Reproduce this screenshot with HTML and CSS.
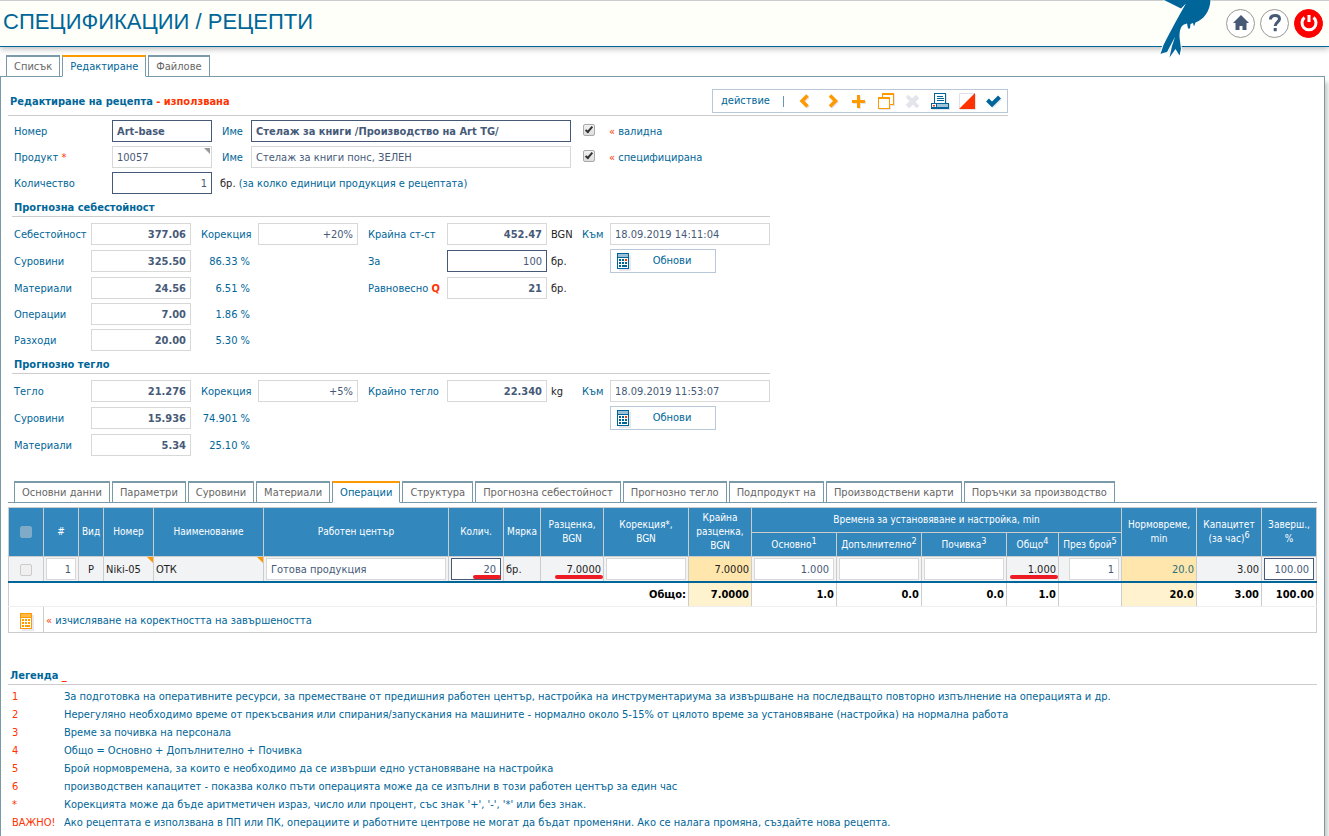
FILE: index.html
```
<!DOCTYPE html>
<html lang="bg">
<head>
<meta charset="utf-8">
<title>Спецификации / Рецепти</title>
<link rel="stylesheet" href="styles.css">
</head>
<body>
<svg class="defs" width="0" height="0" aria-hidden="true">
  <symbol id="calc" viewBox="0 0 12 16">
    <path fill="currentColor" d="M0 0h12v16H0z"/>
    <path fill="#fff" d="M1 5h10v10H1z"/>
    <path class="calc-top" d="M1 1h10v3H1z"/>
    <path fill="currentColor" d="M2 6h2v2H2zM5 6h2v2H5zM2 9h2v2H2zM5 9h2v2H5zM8 9h2v2H8zM2 12h2v2H2zM5 12h5v2H5z"/>
    <path class="calc-key" d="M8 6h2v2H8z"/>
  </symbol>
</svg>

<header class="top">
  <h1>СПЕЦИФИКАЦИИ / РЕЦЕПТИ</h1>
  <svg class="bird" width="70" height="64" viewBox="0 0 70 64" aria-hidden="true">
    <path d="M14 0L31 8.500L36 3.500C30 14 20 32 13.500 45L10.500 54L13 53L17 52L25 37L22 46L19.500 57.500L25.500 49L29.500 55.500L31 49L29.500 37C29.500 30 31 26 34 24.500L37 23.500L38 28.500L40 28.500L40.500 24L43 23L44 26.500L45.500 22.500C53 20 60 12 60.500 0Z" fill="#069" stroke="#fff" stroke-width="2" paint-order="stroke"/>
  </svg>
  <nav class="round-nav">
    <a href="#" class="round" aria-label="Начало"><svg width="18" height="18" viewBox="0 0 18 18"><path fill="#475a75" d="M9 1L1 9h2.500v7H7.500v-4h3v4h4V9H17z"/></svg></a>
    <a href="#" class="round" aria-label="Помощ"><svg width="18" height="20" viewBox="0 0 18 20"><path fill="none" stroke="#475a75" stroke-width="3" d="M4.500 6.500C4.500 3.500 6.500 2.500 9 2.500s4.500 1.200 4.500 3.600C13.500 9 9.200 9.300 9.200 13"/><path fill="#475a75" d="M7.700 15h3v3.200h-3z"/></svg></a>
    <a href="#" class="round power" aria-label="Изход"><svg width="20" height="20" viewBox="0 0 20 20"><path fill="none" stroke="#fff" stroke-width="3" d="M5.500 4.500a7 7 0 1 0 9 0M10 2v7"/></svg></a>
  </nav>
</header>

<nav class="tabs main-tabs">
  <a href="#" class="tab">Списък</a>
  <a href="#" class="tab active">Редактиране</a>
  <a href="#" class="tab">Файлове</a>
</nav>

<main class="panel">
  <div class="title-row">
    <h2>Редактиране на рецепта <span class="red">- използвана</span></h2>
    <div class="toolbar">
      <span class="toolbar-label">действие</span><span class="bar"></span>
      <button type="button" aria-label="Предишен"><svg width="16" height="16" viewBox="0 0 16 16"><path fill="none" stroke="#f90" stroke-width="3.500" d="M10.500 2.500L5 8l5.500 5.500"/></svg></button>
      <button type="button" aria-label="Следващ"><svg width="16" height="16" viewBox="0 0 16 16"><path fill="none" stroke="#f90" stroke-width="3.500" d="M6 2.500L11.500 8L6 13.500"/></svg></button>
      <button type="button" aria-label="Нов"><svg width="16" height="16" viewBox="0 0 16 16"><path fill="#f90" d="M6 2h3v5h5v3H9v5H6v-5H1V7h5z"/></svg></button>
      <button type="button" aria-label="Копие"><svg width="18" height="16" viewBox="0 0 18 16"><path fill="#f90" d="M5 0h12v12h-4v4H1V4h4z"/><path fill="#fff" d="M6 2h10v9h-3V4H6zM2 6h10v9H2z"/></svg></button>
      <button type="button" aria-label="Изтриване" disabled><svg width="16" height="16" viewBox="0 0 16 16"><path fill="none" stroke="#e3e5ea" stroke-width="3.500" d="M2 3l10 10M12 3L2 13"/></svg></button>
      <button type="button" aria-label="Печат"><svg width="18" height="16" viewBox="0 0 18 16"><path fill="#069" d="M3 0h12v10h3v6H0v-6h3z"/><path fill="#fff" d="M4 1h10v9H4zM1 11h4v3H1z"/><path fill="#069" d="M6 3h6v1H6zM6 5h7v1H6zM6 7h7v1H6z"/><path fill="#a3c4d8" d="M6 11h11v3H6z"/><path fill="#f30" d="M2 12h2v1.500H2z"/></svg></button>
      <button type="button" aria-label="Статус"><svg width="16" height="16" viewBox="0 0 16 16"><path fill="#fff" stroke="#e0e0e6" d="M.500.500h15v15H.500z"/><path fill="#f30" d="M16 0v16H0z"/></svg></button>
      <button type="button" aria-label="Запис"><svg width="16" height="16" viewBox="0 0 16 16"><path fill="none" stroke="#069" stroke-width="4" d="M1.500 7l4.500 4.500L13.500 4"/></svg></button>
    </div>
  </div>

  <section class="form identity">
    <label for="num">Номер</label>
    <input id="num" class="field edit strong" value="Art-base">
    <label for="name" class="pad">Име</label>
    <input id="name" class="field edit strong" value="Стелаж за книги /Производство на Art TG/">
    <span class="check-cell"><input type="checkbox" id="valid" checked></span>
    <label for="valid"><span class="red">«</span> валидна</label>

    <label for="prod">Продукт <span class="red">*</span></label>
    <span class="lookup"><input id="prod" class="field" value="10057" readonly></span>
    <label for="prodname" class="pad">Име</label>
    <input id="prodname" class="field" value="Стелаж за книги понс, ЗЕЛЕН" readonly>
    <span class="check-cell"><input type="checkbox" id="spec" checked></span>
    <label for="spec"><span class="red">«</span> специфицирана</label>

    <label for="qty">Количество</label>
    <input id="qty" class="field edit num" value="1">
    <span class="note"><span class="black">бр.</span> (за колко единици продукция е рецептата)</span>
  </section>

  <h3>Прогнозна себестойност</h3>
  <section class="form totals cost">
    <label for="c1">Себестойност</label><input id="c1" class="field num strong" value="377.06" readonly>
    <label for="c1k" class="pad">Корекция</label><input id="c1k" class="field num" value="+20%" readonly>
    <label for="c1f" class="pad">Крайна ст-ст</label><input id="c1f" class="field num strong" value="452.47" readonly>
    <span class="unit">BGN</span><label for="c1d">Към</label><input id="c1d" class="field" value="18.09.2019 14:11:04" readonly>

    <label for="c2">Суровини</label><input id="c2" class="field num strong" value="325.50" readonly>
    <span class="pct">86.33 %</span><label for="c2f" class="pad from-five">За</label><input id="c2f" class="field num edit" value="100">
    <span class="unit">бр.</span><button type="button" class="refresh"><svg width="12" height="16"><use href="#calc"/></svg><span>Обнови</span></button>

    <label for="c3">Материали</label><input id="c3" class="field num strong" value="24.56" readonly>
    <span class="pct">6.51 %</span><label for="c3f" class="pad from-five">Равновесно <b class="red">Q</b></label><input id="c3f" class="field num strong" value="21" readonly>
    <span class="unit">бр.</span>

    <label for="c4" class="first">Операции</label><input id="c4" class="field num strong" value="7.00" readonly><span class="pct">1.86 %</span>
    <label for="c5" class="first">Разходи</label><input id="c5" class="field num strong" value="20.00" readonly><span class="pct">5.30 %</span>
  </section>

  <h3>Прогнозно тегло</h3>
  <section class="form totals weight">
    <label for="w1">Тегло</label><input id="w1" class="field num strong" value="21.276" readonly>
    <label for="w1k" class="pad">Корекция</label><input id="w1k" class="field num" value="+5%" readonly>
    <label for="w1f" class="pad">Крайно тегло</label><input id="w1f" class="field num strong" value="22.340" readonly>
    <span class="unit">kg</span><label for="w1d">Към</label><input id="w1d" class="field" value="18.09.2019 11:53:07" readonly>

    <label for="w2">Суровини</label><input id="w2" class="field num strong" value="15.936" readonly>
    <span class="pct">74.901 %</span><button type="button" class="refresh"><svg width="12" height="16"><use href="#calc"/></svg><span>Обнови</span></button>

    <label for="w3" class="first">Материали</label><input id="w3" class="field num strong" value="5.34" readonly><span class="pct">25.10 %</span>
  </section>

  <nav class="tabs sub-tabs">
    <a href="#" class="tab">Основни данни</a>
    <a href="#" class="tab">Параметри</a>
    <a href="#" class="tab">Суровини</a>
    <a href="#" class="tab">Материали</a>
    <a href="#" class="tab active">Операции</a>
    <a href="#" class="tab">Структура</a>
    <a href="#" class="tab">Прогнозна себестойност</a>
    <a href="#" class="tab">Прогнозно тегло</a>
    <a href="#" class="tab">Подпродукт на</a>
    <a href="#" class="tab">Производствени карти</a>
    <a href="#" class="tab">Поръчки за производство</a>
  </nav>

  <table class="ops">
    <colgroup>
      <col class="w35"><col class="w35"><col class="w25"><col class="w50"><col class="w110"><col><col class="w55"><col class="w37"><col class="w63"><col class="w85"><col class="w63"><col class="w85"><col class="w85"><col class="w85"><col class="w52"><col class="w63"><col class="w75"><col class="w65"><col class="w55">
    </colgroup>
    <thead>
      <tr>
        <th rowspan="2"><input type="checkbox" aria-label="Избор на всички" disabled></th>
        <th rowspan="2">#</th><th rowspan="2">Вид</th><th rowspan="2">Номер</th><th rowspan="2">Наименование</th><th rowspan="2">Работен център</th><th rowspan="2">Колич.</th><th rowspan="2">Мярка</th>
        <th rowspan="2">Разценка,<br>BGN</th><th rowspan="2">Корекция*,<br>BGN</th><th rowspan="2">Крайна<br>разценка,<br>BGN</th>
        <th colspan="5">Времена за установяване и настройка, min</th>
        <th rowspan="2">Нормовреме,<br>min</th><th rowspan="2">Капацитет<br>(за час)<sup>6</sup></th><th rowspan="2">Заверш.,<br>%</th>
      </tr>
      <tr class="sub-head"><th>Основно<sup>1</sup></th><th>Допълнително<sup>2</sup></th><th>Почивка<sup>3</sup></th><th>Общо<sup>4</sup></th><th>През брой<sup>5</sup></th></tr>
    </thead>
    <tbody>
      <tr class="item">
        <td class="mid"><input type="checkbox" aria-label="Избор на ред 1" disabled></td>
        <td class="in"><input class="field num" aria-label="#" value="1" readonly></td>
        <td class="mid">P</td>
        <td class="link">Niki-05</td>
        <td class="link">ОТК</td>
        <td class="in"><input class="field" aria-label="Работен център" value="Готова продукция" readonly></td>
        <td class="in marked short"><input class="field num edit" aria-label="Колич." value="20"></td>
        <td>бр.</td>
        <td class="num marked price">7.0000</td>
        <td class="in"><input class="field num" aria-label="Корекция" readonly></td>
        <td class="num gold">7.0000</td>
        <td class="in"><input class="field num" aria-label="Основно" value="1.000" readonly></td>
        <td class="in"><input class="field num" aria-label="Допълнително" readonly></td>
        <td class="in"><input class="field num" aria-label="Почивка" readonly></td>
        <td class="num marked">1.000</td>
        <td class="in narrow"><input class="field num" aria-label="През брой" value="1" readonly></td>
        <td class="num gold teal">20.0</td>
        <td class="num">3.00</td>
        <td class="in"><input class="field num edit" aria-label="Заверш." value="100.00"></td>
      </tr>
    </tbody>
    <tfoot>
      <tr class="sum">
        <td colspan="10" class="num">Общо:</td><td class="num pale">7.0000</td><td class="num">1.0</td><td class="num">0.0</td><td class="num">0.0</td><td class="num">1.0</td><td></td><td class="num pale">20.0</td><td class="num">3.00</td><td class="num">100.00</td>
      </tr>
      <tr class="tools">
        <td class="mid"><button type="button" class="calc-orange" aria-label="Изчисляване"><svg width="12" height="16"><use href="#calc"/></svg></button></td>
        <td colspan="18"><span class="red">«</span> изчисляване на коректността на завършеността</td>
      </tr>
    </tfoot>
  </table>

  <h3 class="legend-title">Легенда <span class="red">_</span></h3>
  <dl class="legend">
    <dt>1</dt><dd>За подготовка на оперативните ресурси, за преместване от предишния работен център, настройка на инструментариума за извършване на последващто повторно изпълнение на операцията и др.</dd>
    <dt>2</dt><dd>Нерегуляно необходимо време от прекъсвания или спирания/запускания на машините - нормално около 5-15% от цялото време за установяване (настройка) на нормална работа</dd>
    <dt>3</dt><dd>Време за почивка на персонала</dd>
    <dt>4</dt><dd>Общо = Основно + Допълнително + Почивка</dd>
    <dt>5</dt><dd>Брой нормовремена, за които е необходимо да се извърши едно установяване на настройка</dd>
    <dt>6</dt><dd>производствен капацитет - показва колко пъти операцията може да се изпълни в този работен център за един час</dd>
    <dt>*</dt><dd>Корекцията може да бъде аритметичен израз, число или процент, със знак '+', '-', '*' или без знак.</dd>
    <dt>ВАЖНО!</dt><dd>Ако рецептата е използвана в ПП или ПК, операциите и работните центрове не могат да бъдат променяни. Ако се налага промяна, създайте нова рецепта.</dd>
  </dl>
</main>
</body>
</html>
```
FILE: styles.css
```
* { box-sizing: border-box; }

body {
  margin: 0;
  min-height: 100vh;
  display: flex;
  flex-direction: column;
  background: #fff;
  color: #069;
  font: 11px/16px "DejaVu Sans Condensed", "Noto Sans", sans-serif;
}

h1, h2, h3, dl, dd { margin: 0; }
a { color: inherit; text-decoration: none; }
button, input { font: inherit; color: inherit; }
button { padding: 0; border: 0; background: none; }
svg { display: block; }
.defs { position: absolute; }
.red { color: #f30; }
.black { color: #222; }

/* Header */
.top {
  position: relative;
  display: flex;
  align-items: center;
  justify-content: space-between;
  height: 47px;
  padding: 0 6px 0 3px;
  border-top: 1px solid #ccc;
  border-bottom: 1px solid #069;
  background: #fdfff8;
  box-shadow: 0 2px 6px #bbb;
}
h1 {
  padding-bottom: 4px;
  font: 22px/26px "Liberation Sans", sans-serif;
}
.bird { position: absolute; top: -1px; right: 109px; }
.round-nav { display: flex; gap: 5px; padding-bottom: 1px; }
.round {
  display: flex;
  align-items: center;
  justify-content: center;
  width: 29px;
  height: 29px;
  border: 1px solid #999;
  border-radius: 50%;
  background: #fff;
}
.power { border-color: #f00; background: #f00; }

/* Tabs */
.tabs { display: flex; gap: 2px; }
.main-tabs { padding: 8px 6px 0; }
.tab {
  height: 22px;
  padding: 1px 7px 0;
  border: 1px solid #7a9aa9;
  border-top-width: 2px;
  background: #fff;
  color: #666;
  line-height: 18px;
}
.tab.active {
  border-top-color: #f90;
  border-bottom-color: #fff;
  color: #069;
}
.main-tabs .tab { position: relative; z-index: 1; margin-bottom: -1px; }

.panel {
  flex: 1;
  margin-right: 4px;
  padding: 12px 7px 4px;
  border: 1px solid #7a9aa9;
  border-bottom: 0;
  box-shadow: 3px 6px 4px #ccc;
}

.title-row {
  display: flex;
  justify-content: space-between;
  max-width: 1000px;
  padding-bottom: 2px;
  border-bottom: 1px solid #ccc;
}
h2 { padding: 1px 0 0 2px; font-size: 11px; line-height: 23px; }

.toolbar {
  display: flex;
  align-items: center;
  height: 24px;
  border: 1px solid #b8c8d8;
}
.toolbar-label { width: 70px; padding-left: 8px; }
.bar { width: 1px; height: 11px; margin-right: 7px; background: #6699aa; }
.toolbar button {
  display: flex;
  justify-content: center;
  width: 27px;
}
.toolbar svg { filter: drop-shadow(1px 1px 0 #e4e4ea); }

/* Form */
.form { display: grid; margin-left: 6px; }
.form > label, .form > span { line-height: 23px; white-space: nowrap; }
.identity {
  grid-template-columns: 98px 100px 39px 320px 38px auto;
  grid-template-rows: 26px 26px 22px;
  margin-top: 4px;
}
.totals { grid-template-columns: 77px 100px 67px 100px 89px 100px 35px 28px 160px; }
.cost { grid-template-rows: 27px 27px 26px 26px 22px; }
.weight { grid-template-rows: 27px 27px 22px; }

.field {
  display: block;
  width: 100%;
  height: 22px;
  padding: 1px 4px 0;
  border: 1px solid #d8d8d8;
  border-radius: 0;
  background: #fff;
  color: #465a78;
  outline: 0;
}
.edit { border-color: #465a78; }
.strong { font-weight: 700; }
.num { text-align: right; }
.pad { padding-left: 10px; }
.note { grid-column: 3 / -1; padding-left: 8px; }
.first { grid-column: 1; }
.from-five { grid-column: 5; }
.pct { padding-right: 8px; text-align: right; }
.form > .unit { padding-left: 4px; color: #222; line-height: 24px; }

.lookup { position: relative; }
.lookup::after, .link::after {
  content: "";
  position: absolute;
  top: 2px;
  right: 2px;
  border: 3px solid #999;
  border-left-color: transparent;
  border-bottom-color: transparent;
}
.check-cell { padding: 4px 0 0 12px; }

input[type="checkbox"] {
  display: block;
  width: 12px;
  height: 12px;
  margin: 0;
  appearance: none;
  border: 1px solid #aaa;
  border-radius: 2px;
  background: linear-gradient(#f2f2f2, #ddd);
}
input[type="checkbox"]:checked::after {
  content: "";
  display: block;
  width: 2px;
  height: 6px;
  margin: 0 0 0 3px;
  border: solid #333;
  border-width: 0 2px 2px 0;
  transform: rotate(40deg);
}
input[type="checkbox"]:disabled { border-color: #ccc; background: #f0f0f0; }

.refresh {
  --calc-top: #9cbfd6;
  --calc-key: #f30;
  display: flex;
  align-items: center;
  grid-column: 9;
  width: 106px;
  height: 24px;
  margin-top: -1px;
  padding-left: 6px;
  border: 1px solid #b8c8d8;
}
.refresh span { flex: 1; }
.refresh svg, .calc-orange svg { filter: drop-shadow(2px 2px 0 #e8e8ee); }
.calc-top { fill: var(--calc-top); }
.calc-key { fill: var(--calc-key); }

h3 {
  max-width: 758px;
  margin: 5px 0 6px 4px;
  padding: 1px 2px 0;
  border-bottom: 1px solid #ccc;
  font-size: 11px;
}

/* Operations */
.sub-tabs {
  margin-top: 25px;
  padding: 0 6px;
  border-bottom: 1px solid #7a9aa9;
}
.sub-tabs .tab { margin-bottom: -1px; white-space: nowrap; }

.ops {
  width: 100%;
  margin-top: 4px;
  border-collapse: collapse;
  table-layout: fixed;
}
.w25 { width: 25px; }
.w35 { width: 35px; }
.w37 { width: 37px; }
.w50 { width: 50px; }
.w52 { width: 52px; }
.w55 { width: 55px; }
.w63 { width: 63px; }
.w65 { width: 65px; }
.w75 { width: 75px; }
.w85 { width: 85px; }
.w110 { width: 110px; }

.ops th {
  height: 25px;
  padding: 0;
  border: 1px solid #ccc;
  background: #3287bd;
  color: #fff;
  font-size: 10px;
  font-weight: 400;
  line-height: 14px;
  white-space: nowrap;
}
.ops .sub-head th { height: 24px; }
.ops th input[type="checkbox"] {
  margin: 0 auto;
  border-color: #7fabc8;
  background: #7fabc8;
}
.ops sup { font-size: 9px; line-height: 0; }
.ops td {
  height: 25px;
  padding: 2px 2px 0;
  border: 1px solid #ccc;
  color: #222;
}
.item td { position: relative; background: #f2f3f5; }
.ops td.in { padding: 0 2px; }
.ops td.narrow { padding-left: 10px; }
.ops td.mid { text-align: center; }
.mid input[type="checkbox"] { margin: 0 auto; }
.ops .item td { border-bottom: 2px solid #069; }
.ops .item td.gold { background: #ffe6ac; }
.ops .item td.teal { color: #2c6f7c; }
.ops td.pale { background: #fff2cf; }
.link::after { top: 0; right: 0; border-color: #f90 #f90 transparent transparent; }
.marked::after {
  content: "";
  position: absolute;
  left: 3px;
  right: 0;
  bottom: 2px;
  height: 4px;
  border-radius: 2px;
  background: #ed1c24;
}
.price::after { left: 14px; }
.short::after { left: 24px; right: 2px; }
.sum td { font-weight: 700; }
.ops .sum td { border-bottom-color: #eee; color: #000; }
.ops .tools td { height: 26px; color: #069; }
.calc-orange {
  --calc-top: #fb4;
  --calc-key: #f90;
  display: inline-block;
  color: #f90;
  vertical-align: middle;
}

/* Legend */
h3.legend-title { max-width: none; margin: 34px 0 3px; }
.legend {
  display: grid;
  grid-template-columns: 52px 1fr;
  padding-left: 4px;
  line-height: 18px;
}
dt { color: #f30; }
```
